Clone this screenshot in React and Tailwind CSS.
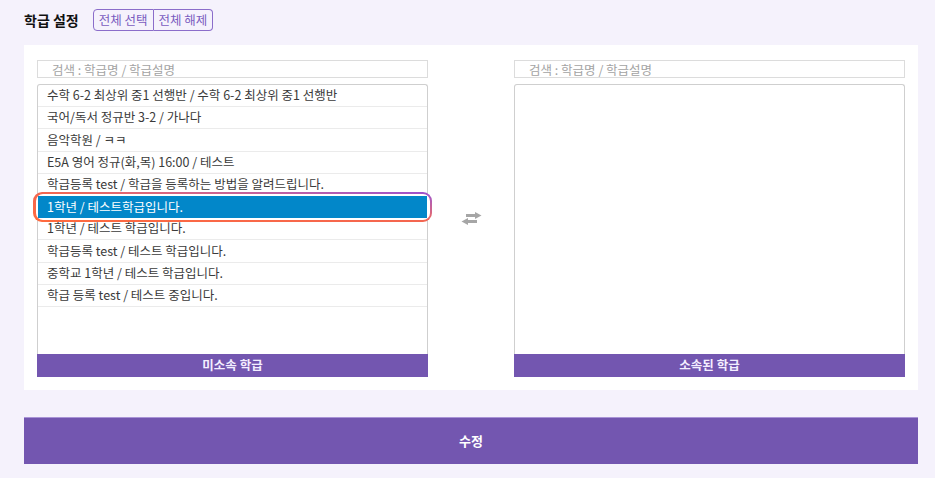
const font = { fontFamily: '"Noto Sans CJK KR", "Noto Sans", sans-serif' };

const unassigned = [
  '수학 6-2 최상위 중1 선행반 / 수학 6-2 최상위 중1 선행반',
  '국어/독서 정규반 3-2 / 가나다',
  '음악학원 / ㅋㅋ',
  'E5A 영어 정규(화,목) 16:00 / 테스트',
  '학급등록 test / 학급을 등록하는 방법을 알려드립니다.',
  '1학년 / 테스트학급입니다.',
  '1학년 / 테스트 학급입니다.',
  '학급등록 test / 테스트 학급입니다.',
  '중학교 1학년 / 테스트 학급입니다.',
  '학급 등록 test / 테스트 중입니다.',
];

// two solid arrows, right on top and left below
function SwapIcon() {
  return (
    <svg width="21" height="13" viewBox="0 0 21 13" className="text-[#a6a6a6]" fill="currentColor">
      <rect x="5" y="2" width="10" height="3" />
      <polygon points="14,0 20.5,3.5 14,7" />
      <rect x="6" y="8" width="10" height="3" />
      <polygon points="7,6 0.5,9.5 7,13" />
    </svg>
  );
}

function ClassList({ items = [], selected, label }) {
  return (
    <div className="flex w-[391px] flex-col">
      <input
        type="text"
        placeholder="검색 : 학급명 / 학급설명"
        className="h-[18px] w-full border border-[#dcdcdc] bg-white pl-[14px] text-[12.5px] leading-none text-[#333] outline-none placeholder:text-[#a3a3a3]"
        style={font}
      />
      <div className="mt-[6px] h-[270px] rounded-t-[3px] border border-b-0 border-[#cfcfcf] bg-white">
        {items.map((item, i) =>
          i === selected ? (
            <div key={i} className="relative h-[22.2px]">
              <div className="absolute -inset-x-[5px] -top-[4px] -bottom-[4px] rounded-[9px] bg-gradient-to-tr from-[#ff6a3d] via-[#f4664f] to-[#9b4fd0] p-[2.5px]">
                <div className="h-full w-full rounded-[7px] bg-white" />
              </div>
              <div className="relative flex h-full items-center bg-[#0287c9] pl-[9px] text-[12.5px] text-white">
                {item}
              </div>
            </div>
          ) : (
            <div
              key={i}
              className="flex h-[22.2px] items-center border-b border-[#ebebeb] pl-[9px] text-[12.5px] text-[#3a3a3a]"
            >
              {item}
            </div>
          )
        )}
      </div>
      <div className="flex h-[23px] items-center justify-center bg-[#7356b0] text-[12.5px] font-bold text-[#f3eeff]">
        {label}
      </div>
    </div>
  );
}

export default function App() {
  return (
    <div className="min-h-[478px] bg-[#f5f2fc] pl-6 pr-[17px] pt-[9px]" style={font}>
      <div className="flex items-center gap-[14px]">
        <h2 className="text-[14px] font-bold text-[#111]">학급 설정</h2>
        <div className="flex h-[22px] text-[12.5px] text-[#7a5cc0]">
          <button className="rounded-l-[4px] border border-[#8b6dca] px-[5px]">전체 선택</button>
          <button className="rounded-r-[4px] border border-l-0 border-[#8b6dca] px-[5px]">전체 해제</button>
        </div>
      </div>

      <div className="mt-[14px] flex items-start justify-between bg-white px-[13px] pt-[15px] pb-[13px]">
        <ClassList items={unassigned} selected={5} label="미소속 학급" />
        <div className="flex h-[317px] flex-1 items-center justify-center">
          <SwapIcon />
        </div>
        <ClassList label="소속된 학급" />
      </div>

      <button className="mt-[27px] flex h-[47px] w-full items-center justify-center border-t border-[#a994d6] bg-[#7356b0] text-[13px] font-bold text-white">
        수정
      </button>
    </div>
  );
}
